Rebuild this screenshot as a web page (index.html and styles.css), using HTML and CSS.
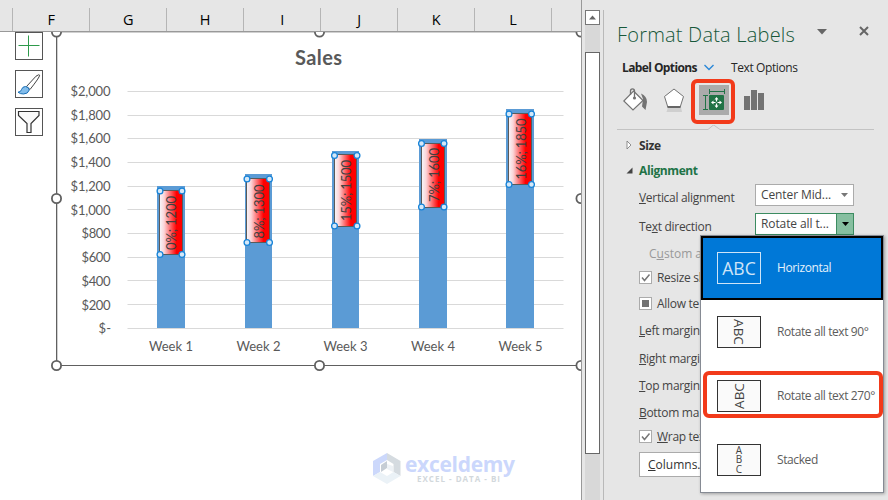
FILE: index.html
```html
<!DOCTYPE html>
<html lang="en">
<head>
  <meta charset="UTF-8">
  <meta name="viewport" content="width=device-width, initial-scale=1.0">
  <title>Format Data Labels</title>
  <link rel="stylesheet" href="styles.css">
</head>
<body>
  <div class="app">
    <main class="sheet">
      <div class="columns">
        <span></span><span>F</span><span>G</span><span>H</span><span>I</span><span>J</span><span>K</span><span>L</span><span></span>
      </div>
      <div class="cells">
        <div class="chart-tools">
          <button class="tool"><svg width="26" height="26"><path d="M2.5 12.5h21M12.5 2.5v21" stroke="#2e9a4b" fill="none"/></svg></button>
          <button class="tool">
            <svg width="26" height="26">
              <path d="M10.500 15.500L20 5.200Q23.500 2.800 23.700 4.200Q23.500 6.500 14 18.500Z" fill="#fff" stroke="#444"/>
              <path d="M2 21.200Q5 21 5.500 18.500Q6.500 15.500 9.500 15.500Q13 16 13.300 19Q12 23 7.500 23Q4 23 2 21.200Z" fill="#83bdeb" stroke="#1a70b8"/>
            </svg>
          </button>
          <button class="tool"><svg width="26" height="26"><path d="M2.500 2.500h20.500v4L15 14.500v9h-4v-9L2.500 6.500z" fill="#fafafa" stroke="#333" stroke-width="1.200"/></svg></button>
        </div>

        <svg class="chart" width="530" height="340" viewBox="51 32 530 340">
          <defs>
            <linearGradient id="label-fill">
              <stop offset="0" stop-color="#f6f8fc"/>
              <stop offset="0.200" stop-color="#fbd5d8"/>
              <stop offset="0.740" stop-color="#ff0000"/>
              <stop offset="1" stop-color="#ff0000"/>
            </linearGradient>
          </defs>
          <path class="frame-shade" d="M57.500 33V365M57 32.500H581"/>
          <path class="frame" d="M56.500 32V365.500H581"/>
          <text class="chart-title" x="318.500" y="65" textLength="47">Sales</text>

          <path class="grid" d="M127.500 91.500H563.500M127.500 115.500H563.500M127.500 138.500H563.500M127.500 162.500H563.500M127.500 186.500H563.500M127.500 209.500H563.500M127.500 233.500H563.500M127.500 257.500H563.500M127.500 280.500H563.500M127.500 304.500H563.500M127.500 328.500H563.500"/>

          <g class="axis-y">
            <text x="110.500" y="96" textLength="40">$2,000</text>
            <text x="110.500" y="119.500" textLength="40">$1,800</text>
            <text x="110.500" y="143" textLength="40">$1,600</text>
            <text x="110.500" y="167" textLength="40">$1,400</text>
            <text x="110.500" y="190.500" textLength="40">$1,200</text>
            <text x="110.500" y="214.500" textLength="40">$1,000</text>
            <text x="110.500" y="238" textLength="29">$800</text>
            <text x="110.500" y="262" textLength="29">$600</text>
            <text x="110.500" y="285.500" textLength="29">$400</text>
            <text x="110.500" y="309.500" textLength="29">$200</text>
            <text x="111" y="333" textLength="12.500">$-</text>
          </g>

          <g class="bars">
            <rect x="157" y="186" width="28" height="142"/>
            <rect x="245" y="174" width="27" height="154"/>
            <rect x="332" y="151" width="27" height="177"/>
            <rect x="419" y="139" width="28" height="189"/>
            <rect x="506" y="109" width="28" height="219"/>
          </g>

          <g class="labels">
            <rect x="159.500" y="190.500" width="23" height="64"/>
            <rect x="246.500" y="178.500" width="23" height="64"/>
            <rect x="334.500" y="154.500" width="22" height="72"/>
            <rect x="421.500" y="143.500" width="23" height="64"/>
            <rect x="508.500" y="113.500" width="23" height="71"/>
          </g>
          <g class="label-text">
            <text transform="translate(176 250) rotate(-90)" textLength="54">0%; 1200</text>
            <text transform="translate(263.500 238.500) rotate(-90)" textLength="54">8%; 1300</text>
            <text transform="translate(351 221) rotate(-90)" textLength="61">15%; 1500</text>
            <text transform="translate(438.500 202) rotate(-90)" textLength="54">7%; 1600</text>
            <text transform="translate(525.500 179.500) rotate(-90)" textLength="61">16%; 1850</text>
          </g>
          <g class="grips">
            <circle cx="160" cy="191" r="2.900"/><circle cx="182" cy="191" r="2.900"/><circle cx="160" cy="254.500" r="2.900"/><circle cx="182" cy="254.500" r="2.900"/>
            <circle cx="247" cy="179" r="2.900"/><circle cx="269.500" cy="179" r="2.900"/><circle cx="247" cy="242.500" r="2.900"/><circle cx="269.500" cy="242.500" r="2.900"/>
            <circle cx="334.500" cy="155.500" r="2.900"/><circle cx="357" cy="155.500" r="2.900"/><circle cx="334.500" cy="226" r="2.900"/><circle cx="357" cy="226" r="2.900"/>
            <circle cx="421.500" cy="143.500" r="2.900"/><circle cx="444" cy="143.500" r="2.900"/><circle cx="421.500" cy="207" r="2.900"/><circle cx="444" cy="207" r="2.900"/>
            <circle cx="509" cy="114" r="2.900"/><circle cx="531.500" cy="114" r="2.900"/><circle cx="509" cy="184.500" r="2.900"/><circle cx="531.500" cy="184.500" r="2.900"/>
          </g>

          <g class="axis-x">
            <text x="171" y="351" textLength="44">Week 1</text>
            <text x="258.500" y="351" textLength="44">Week 2</text>
            <text x="345.500" y="351" textLength="44">Week 3</text>
            <text x="433" y="351" textLength="44">Week 4</text>
            <text x="520.500" y="351" textLength="44">Week 5</text>
          </g>

          <g class="handles">
            <circle cx="56.500" cy="32" r="4.600"/><circle cx="319.500" cy="32" r="4.600"/><circle cx="581" cy="32" r="4.600"/>
            <circle cx="56.500" cy="198.500" r="4.600"/><circle cx="581" cy="198.500" r="4.600"/>
            <circle cx="56.500" cy="365.500" r="4.600"/><circle cx="319.500" cy="365.500" r="4.600"/><circle cx="581" cy="365.500" r="4.600"/>
          </g>
        </svg>
      </div>
      <div class="brand">
        <svg width="28" height="32">
          <path d="M14 0L0 8v15l7-4v-8l7-4z" fill="#ccd8fb"/>
          <path d="M14 0l13.500 8v15l-7-4v-8L14 7z" fill="#d5dbe0"/>
          <path d="M0 23l7-4 7 4 6.500-4 7 4L14 31z" fill="#ebf2f7"/>
          <path d="M8 12l6-4v7l-6 4z" fill="#c6cdd5"/>
          <path d="M14 11l6 2v6l-6-3z" fill="#eef2f6"/>
        </svg>
        <div>
          <div class="brand-name">exceldemy</div>
          <div class="brand-sub">EXCEL - DATA - BI</div>
        </div>
      </div>
    </main>

    <div class="scrollbar">
      <div class="scroll-up"><svg width="13" height="13"><path d="M3 8.500L6.500 4.500 10 8.500z" fill="#666"/></svg></div>
      <div class="thumb"></div>
    </div>

    <aside class="pane">
      <header class="pane-head">
        <h1>Format Data Labels</h1>
        <svg class="caret" width="10" height="6"><path d="M0 0h10L5 5.500z" fill="#666"/></svg>
        <svg class="close" width="10" height="10"><path d="M1 1l8 8M9 1L1 9" stroke="#666" stroke-width="2"/></svg>
      </header>

      <nav class="tabs">
        <b>Label Options</b>
        <svg width="10" height="7"><path d="M0.500 1L5 5.500 9.500 1" fill="none" stroke="#2b88d8" stroke-width="1.400"/></svg>
        <span>Text Options</span>
      </nav>

      <div class="icons">
        <svg width="25" height="24">
          <path d="M18 5.500Q24 8 24 14L22.500 22 19 18.500 20 11z" fill="#737373"/>
          <path d="M10.500 3L20 12.500 10 22 0.800 13z" fill="#fff" stroke="#737373" stroke-width="1.200"/>
          <path d="M7.500 7V3Q7.500 0.800 9.500 0.800T11.500 3v6" fill="none" stroke="#737373" stroke-width="1.300"/>
          <circle cx="11.500" cy="10" r="1.600" fill="#737373"/>
        </svg>
        <svg width="22" height="24">
          <path d="M5 19h13l1 5H3.500z" fill="#cfcfcf"/>
          <path d="M11 1l9.500 7.500-3.300 10.500H4.800L1.500 8.500z" fill="#fff" stroke="#737373"/>
          <path d="M4.500 19h13" stroke="#666" stroke-width="2"/>
        </svg>
        <div class="icon-active">
          <svg width="30" height="30">
            <path d="M4 10.500h5M4 24.500h5M6.500 10.500v14M10.500 4v5M25.500 4v5M10.500 6.500h15" stroke="#217346" fill="none"/>
            <rect x="10" y="10" width="15" height="15" rx="1" fill="#217346"/>
            <path d="M17.500 14v2.500M17.500 18.500v2.500M14 17.500h2.500M18.500 17.500h2.500" stroke="#fff" stroke-width="1.200"/>
            <path d="M15.500 14.500l2-2.500 2 2.500zM15.500 20.500l2 2.500 2-2.500zM14.500 15.500l-2.500 2 2.500 2zM20.500 15.500l2.500 2-2.500 2z" fill="#fff"/>
          </svg>
          <div class="callout"></div>
        </div>
        <svg width="20" height="22"><path d="M0 7h6v14H0zM7 1h6v20H7zM14 4h6v17h-6z" fill="#737373"/></svg>
      </div>

      <svg class="divider" width="257" height="8"><path d="M0 4.500h91l6-5M96 -0.500l7 5M103 4.500h154" fill="none" stroke="#c3c3c3"/></svg>

      <div class="section"><svg width="8" height="10"><path d="M1 1l4 4-4 4z" fill="#fff" stroke="#777" stroke-width="0.800"/></svg><b>Size</b></div>
      <div class="section open"><svg width="8" height="10"><path d="M6.500 1.500v6H0.500z" fill="#444"/></svg><b>Alignment</b></div>

      <div class="field"><label><u>V</u>ertical alignment</label><div class="select"><span>Center Mid...</span><svg width="7" height="4"><path d="M0 0h7L3.500 4z" fill="#777"/></svg></div></div>
      <div class="field"><label>Te<u>x</u>t direction</label><div class="select active"><span>Rotate all t...</span><i><svg width="7" height="4"><path d="M0 0h7L3.500 4z" fill="#000"/></svg></i></div></div>

      <div class="row disabled">C<u>u</u>stom a</div>
      <div class="row check"><svg width="13" height="13"><rect x="0.500" y="0.500" width="12" height="12" fill="#fff" stroke="#ababab"/><path d="M3 6.500l2.500 3 5-6" fill="none" stroke="#777" stroke-width="1.500"/></svg>Resize sh</div>
      <div class="row check tall"><svg width="13" height="13"><rect x="0.500" y="0.500" width="12" height="12" fill="#fff" stroke="#ababab"/><path d="M3 3h7v7H3z" fill="#737373"/></svg>Allow te</div>
      <div class="row margin"><u>L</u>eft margin</div>
      <div class="row margin"><u>R</u>ight margi</div>
      <div class="row margin"><u>T</u>op margin</div>
      <div class="row margin"><u>B</u>ottom ma</div>
      <div class="row check wrap"><svg width="13" height="13"><rect x="0.500" y="0.500" width="12" height="12" fill="#fff" stroke="#ababab"/><path d="M3 6.500l2.500 3 5-6" fill="none" stroke="#777" stroke-width="1.500"/></svg><span><u>W</u>rap tex</span></div>
      <button class="columns-btn"><u>C</u>olumns.</button>
    </aside>
  </div>

  <div class="menu">
    <div class="option selected"><div class="thumbnail">ABC</div><span>Horizontal</span></div>
    <div class="option"><div class="thumbnail"><span class="cw">ABC</span></div><span>Rotate all text 90°</span></div>
    <div class="option picked"><div class="thumbnail"><span class="ccw">ABC</span></div><span>Rotate all text 270°</span></div>
    <div class="option"><div class="thumbnail stacked"><span>A</span><span>B</span><span>C</span></div><span>Stacked</span></div>
  </div>
</body>
</html>
```

FILE: styles.css
```css
* {
  box-sizing: border-box;
}

body {
  margin: 0;
  width: 888px;
  height: 500px;
  overflow: hidden;
  position: relative;
  background: #e6e6e6;
  color: #262626;
  font-family: "Open Sans", "Noto Sans", sans-serif;
  font-size: 12px;
  letter-spacing: -0.3px;
}

svg {
  display: block;
  flex: none;
}

.app {
  display: grid;
  grid-template-columns: 582px 21px 285px;
  height: 500px;
}

/* Worksheet */
.sheet {
  display: flex;
  flex-direction: column;
  background: #fff;
  border-right: 1px solid #999;
  overflow: hidden;
}

.columns {
  display: grid;
  grid-template-columns: 13px repeat(7, 77px) 29px;
  flex: none;
  height: 32px;
  margin-right: -1px;
  padding-top: 8px;
  background: #e6e6e6;
  border-bottom: 1px solid #999;
}

.columns span {
  border-right: 1px solid #b5b5b5;
  text-align: center;
  font-size: 14.5px;
  line-height: 23px;
  color: #000;
}

.columns span:last-child {
  border-right: none;
}

.cells {
  display: flex;
  height: 340px;
}

.chart-tools {
  display: flex;
  flex-direction: column;
  gap: 10px;
  width: 51px;
  padding-left: 15px;
}

.tool {
  width: 28px;
  height: 28px;
  padding: 0;
  background: #fff;
  border: 1px solid #555;
}

/* Chart */
.chart text {
  font-family: Lato, sans-serif;
  font-size: 13px;
  letter-spacing: 0;
  fill: #595959;
}

.frame {
  fill: none;
  stroke: #606060;
}

.frame-shade {
  fill: none;
  stroke: #d0d0d0;
}

.grid {
  stroke: #d9d9d9;
}

.chart .chart-title {
  font-size: 20px;
  font-weight: bold;
  text-anchor: middle;
}

.axis-y {
  text-anchor: end;
}

.axis-x {
  text-anchor: middle;
}

.bars {
  fill: #5b9bd5;
}

.labels rect {
  fill: url(#label-fill);
  stroke: #5a5a5a;
}

.chart .label-text text {
  fill: #404040;
}

.grips {
  fill: #d5e8f8;
  stroke: #1683d8;
  stroke-width: 1.3;
}

.handles {
  fill: #fff;
  stroke: #606060;
  stroke-width: 1.8;
}

/* Watermark */
.brand {
  display: flex;
  gap: 4px;
  margin: 81px 0 0 373px;
}

.brand-name {
  font-size: 21px;
  font-weight: bold;
  line-height: 22px;
  letter-spacing: -0.3px;
  color: #cbd7fc;
}

.brand-sub {
  padding-left: 12px;
  font-size: 8px;
  font-weight: bold;
  line-height: 8px;
  letter-spacing: 1px;
  color: #d2d8dc;
}

/* Scrollbar */
.scrollbar {
  width: 15px;
  margin: 10px 0 0 3px;
  background: #d8d8d8;
}

.scroll-up {
  width: 15px;
  height: 15px;
  background: #fff;
  border: 1px solid #777;
}

.thumb {
  height: 402px;
  margin-top: 27px;
  background: #fff;
  border: 1px solid #666;
}

/* Format pane */
.pane {
  margin-top: 10px;
  padding-left: 13px;
  border-left: 1px solid #b9b9b9;
  overflow: hidden;
}

.pane-head {
  display: flex;
  height: 46px;
}

h1 {
  width: 200px;
  margin: 0;
  padding-top: 10px;
  font-size: 20px;
  font-weight: 300;
  line-height: 30px;
  letter-spacing: 0.2px;
  white-space: nowrap;
  color: #17583a;
}

.caret {
  margin-top: 19px;
}

.close {
  margin: 16px 0 0 32px;
}

.tabs {
  display: flex;
  align-items: center;
  height: 22px;
  padding-left: 5px;
  white-space: nowrap;
}

.tabs b {
  width: 82px;
  letter-spacing: -0.6px;
}

.tabs span {
  margin-left: 17px;
  letter-spacing: -0.4px;
}

.icons {
  display: flex;
  align-items: center;
  height: 44px;
  padding-left: 6px;
}

.icons > svg:nth-child(2) {
  margin-left: 15px;
}

.icon-active {
  position: relative;
  width: 30px;
  height: 30px;
  margin: 0 15px 0 14px;
  background: #ababab;
}

.callout {
  position: absolute;
  left: -8px;
  top: -6px;
  width: 44px;
  height: 45px;
  border: 4px solid #f23a1a;
  border-radius: 6px;
}

.divider {
  margin: 3px 0 -1px;
}

.section {
  display: flex;
  align-items: center;
  gap: 5px;
  height: 26px;
  padding-left: 9px;
  letter-spacing: -0.4px;
  color: #333;
}

.section.open {
  height: 25px;
  color: #217346;
}

.field {
  display: flex;
  align-items: center;
  height: 29px;
  padding-left: 22px;
  color: #444;
}

.field label {
  width: 116px;
}

.select {
  display: flex;
  align-items: center;
  justify-content: space-between;
  width: 99px;
  height: 22px;
  margin-top: -6px;
  padding: 0 5px;
  background: #fff;
  border: 1px solid #ababab;
  letter-spacing: -0.1px;
}

.select.active {
  padding-right: 0;
  border-color: #3c8c61;
}

.select i {
  display: flex;
  align-items: center;
  justify-content: center;
  width: 17px;
  height: 20px;
  background: #86bfa0;
  border-left: 1px solid #3c8c61;
}

.row {
  display: flex;
  align-items: center;
  height: 25px;
  padding-left: 22px;
  white-space: pre;
  color: #444;
}

.disabled {
  height: 24px;
  padding-left: 32px;
  letter-spacing: 0;
  color: #999;
}

.check {
  gap: 5px;
}

.check.tall {
  height: 26px;
}

.margin {
  height: 27px;
}

.tall + .margin {
  height: 29px;
}

.wrap {
  height: 20px;
}

.columns-btn {
  display: block;
  width: 90px;
  height: 25px;
  margin: 6px 0 0 22px;
  padding: 0 8px;
  background: #fff;
  border: 1px solid #ababab;
  font: inherit;
  letter-spacing: 0;
  text-align: left;
  color: #333;
}

/* Text direction menu, opens over the pane */
.menu {
  position: absolute;
  left: 700px;
  top: 235px;
  width: 184px;
  height: 258px;
  background: #fff;
  border: 1px solid #868b94;
  box-shadow: 1px 1px 3px rgba(0, 0, 0, 0.3);
}

.option {
  position: relative;
  display: flex;
  align-items: center;
  gap: 16px;
  height: 64px;
  padding-left: 16px;
  white-space: nowrap;
  letter-spacing: -0.4px;
  color: #5c5c5c;
}

.option > span {
  padding-bottom: 1px;
}

.option.selected {
  padding-left: 14px;
  background: #0078d7;
  border: 2px solid #000;
  color: #e5f1fb;
}

.option.picked::after {
  content: "";
  position: absolute;
  box-sizing: border-box;
  left: 2px;
  top: 7px;
  width: 180px;
  height: 47px;
  border: 4px solid #f23a1a;
  border-radius: 6px;
}

.thumbnail {
  display: flex;
  align-items: center;
  justify-content: center;
  width: 44px;
  height: 32px;
  background: #fafafa;
  border: 1px solid #333;
  font-size: 13.5px;
  letter-spacing: 0;
  color: #444;
}

.selected .thumbnail {
  background: none;
  border-color: #cfe4f7;
  font-size: 17.5px;
  color: #cfe4f7;
}

.cw {
  transform: rotate(90deg);
}

.ccw {
  transform: rotate(-90deg);
}

.stacked {
  flex-direction: column;
  font-size: 10px;
  line-height: 9.5px;
}
```
